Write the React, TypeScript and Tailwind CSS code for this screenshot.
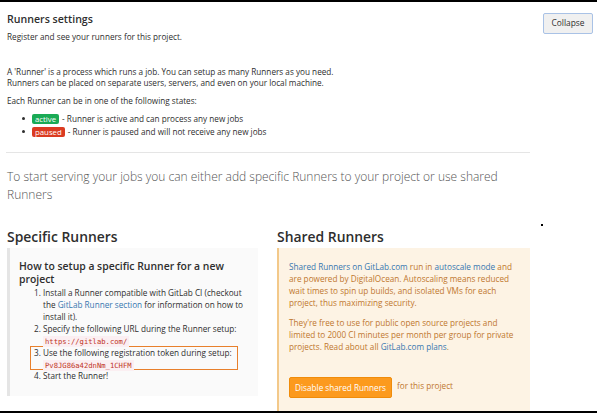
import React from "react";

export default function App() {
  const font = { fontFamily: '"Open Sans", "Noto Sans", Arial, sans-serif' };
  const mono = { fontFamily: '"DejaVu Sans Mono", "Liberation Mono", monospace' };
  return (
    <div
      className="w-[597px] h-[416px] bg-white overflow-hidden relative border-t-2 border-black"
      style={font}
    >
      <div className="h-[411px] overflow-hidden border-b-2 border-black">
        <div className="w-[524px] ml-[6px] pl-[1px] pt-[9px]">
          <div className="text-[10.6px] leading-[16px] font-semibold text-[#2e2e2e]">Runners settings</div>
          <div className="text-[8.2px] leading-[12px] mt-[4px] text-[#2e2e2e]">
            Register and see your runners for this project.
          </div>
          <div className="text-[8.2px] leading-[11px] mt-[23px] text-[#2e2e2e]">
            <p>A 'Runner' is a process which runs a job. You can setup as many Runners as you need.</p>
            <p>Runners can be placed on separate users, servers, and even on your local machine.</p>
            <p className="mt-[7px]">Each Runner can be in one of the following states:</p>
            <div className="mt-[7px] flex flex-col gap-[2px]">
              <div className="flex items-center h-[11px]">
                <span className="w-[3px] h-[3px] rounded-full bg-[#2e2e2e] ml-[15px] mr-[7px]"></span>
                <span className="bg-[#1aaa55] text-white text-[7.8px] leading-[10px] px-[3px] rounded-[2px] mr-[3px]">active</span>
                <span>- Runner is active and can process any new jobs</span>
              </div>
              <div className="flex items-center h-[11px]">
                <span className="w-[3px] h-[3px] rounded-full bg-[#2e2e2e] ml-[15px] mr-[7px]"></span>
                <span className="bg-[#db3b21] text-white text-[7.8px] leading-[10px] px-[3px] rounded-[2px] mr-[3px]">paused</span>
                <span>- Runner is paused and will not receive any new jobs</span>
              </div>
            </div>
          </div>
          <div className="mt-[15px] border-t border-[#e5e5e5] -ml-[1px]"></div>
          <div className="mt-[15px] text-[12px] leading-[18px] font-light text-[#555]">
            To start serving your jobs you can either add specific Runners to your project or use shared Runners
          </div>
        </div>

        <div className="ml-[7px] mt-[23px] flex gap-[19px]">
          <div className="w-[251px]">
            <div className="text-[13.9px] leading-[20px] font-semibold text-[#2e2e2e]">Specific Runners</div>
            <div className="mt-[1px] bg-[#fafafa] border-l-[3px] border-[#e5e5e5] h-[148px] pl-[9px] pr-[12px] pt-[12px] text-[#2e2e2e]">
              <div className="text-[10.4px] leading-[13px] font-semibold">How to setup a specific Runner for a new project</div>
              <div className="mt-[1px] text-[8.2px] leading-[12px] pl-[15px]">
                <div className="flex">
                  <span className="w-[9px] shrink-0">1.</span>
                  <div>
                    <div>Install a Runner compatible with GitLab CI (checkout</div>
                    <div>
                      the <a className="text-[#3777b0]">GitLab Runner section</a> for information on how to
                    </div>
                    <div>install it).</div>
                  </div>
                </div>
                <div className="flex">
                  <span className="w-[9px] shrink-0">2.</span>
                  <div>
                    <div>Specify the following URL during the Runner setup:</div>
                    <div className="h-[11px]">
                      <code className="bg-[#fbeff2] text-[#c0341d] text-[7.2px] leading-[10px] px-[2px] py-[1px]" style={mono}>https://gitlab.com/</code>
                    </div>
                  </div>
                </div>
                <div className="flex border border-[#e8802c] -ml-[4px] pl-[3px] w-[208px]">
                  <span className="w-[9px] shrink-0">3.</span>
                  <div>
                    <div>Use the following registration token during setup:</div>
                    <div className="h-[10px]">
                      <code className="bg-[#fbeff2] text-[#c0341d] text-[7.2px] leading-[10px] px-[2px] py-[1px]" style={mono}>Pv8JG86a42dnNm_1CHFM</code>
                    </div>
                  </div>
                </div>
                <div className="flex">
                  <span className="w-[9px] shrink-0">4.</span>
                  <span>Start the Runner!</span>
                </div>
              </div>
            </div>
          </div>

          <div className="w-[253px]">
            <div className="text-[13.9px] leading-[20px] font-semibold text-[#2e2e2e]">Shared Runners</div>
            <div className="mt-[1px] bg-[#fdf3e4] border-l-2 border-[#f3c98a] h-[170px] pl-[10px] pr-[10px] pt-[13px] text-[8.2px] leading-[12px] text-[#c0772e]">
              <div>
                <div>
                  <a className="text-[#3777b0]">Shared Runners on GitLab.com</a> run in <a className="text-[#3777b0]">autoscale mode</a> and
                </div>
                <div>are powered by DigitalOcean. Autoscaling means reduced</div>
                <div>wait times to spin up builds, and isolated VMs for each</div>
                <div>project, thus maximizing security.</div>
              </div>
              <div className="mt-[8px]">
                <div>They're free to use for public open source projects and</div>
                <div>limited to 2000 CI minutes per month per group for private</div>
                <div>
                  projects. Read about all <a className="text-[#3777b0]">GitLab.com plans</a>.
                </div>
              </div>
              <div className="mt-[24px] flex items-center">
                <button className="w-[103px] h-[21px] bg-[#fc9a1e] border border-[#f08c0a] rounded-[2px] text-white text-[8.2px]">
                  Disable shared Runners
                </button>
                <span className="ml-[5px] -mt-[3px]">for this project</span>
              </div>
            </div>
          </div>
        </div>
      </div>

      <button className="absolute left-[543px] top-[11px] w-[50px] h-[21px] bg-[#f0f0f0] border border-[#a9c2e6] rounded-[2px] text-[8.4px] text-[#2e2e2e]">
        Collapse
      </button>
      <div className="absolute left-[541px] top-[222px] w-[2px] h-[2px] bg-black"></div>
    </div>
  );
}
